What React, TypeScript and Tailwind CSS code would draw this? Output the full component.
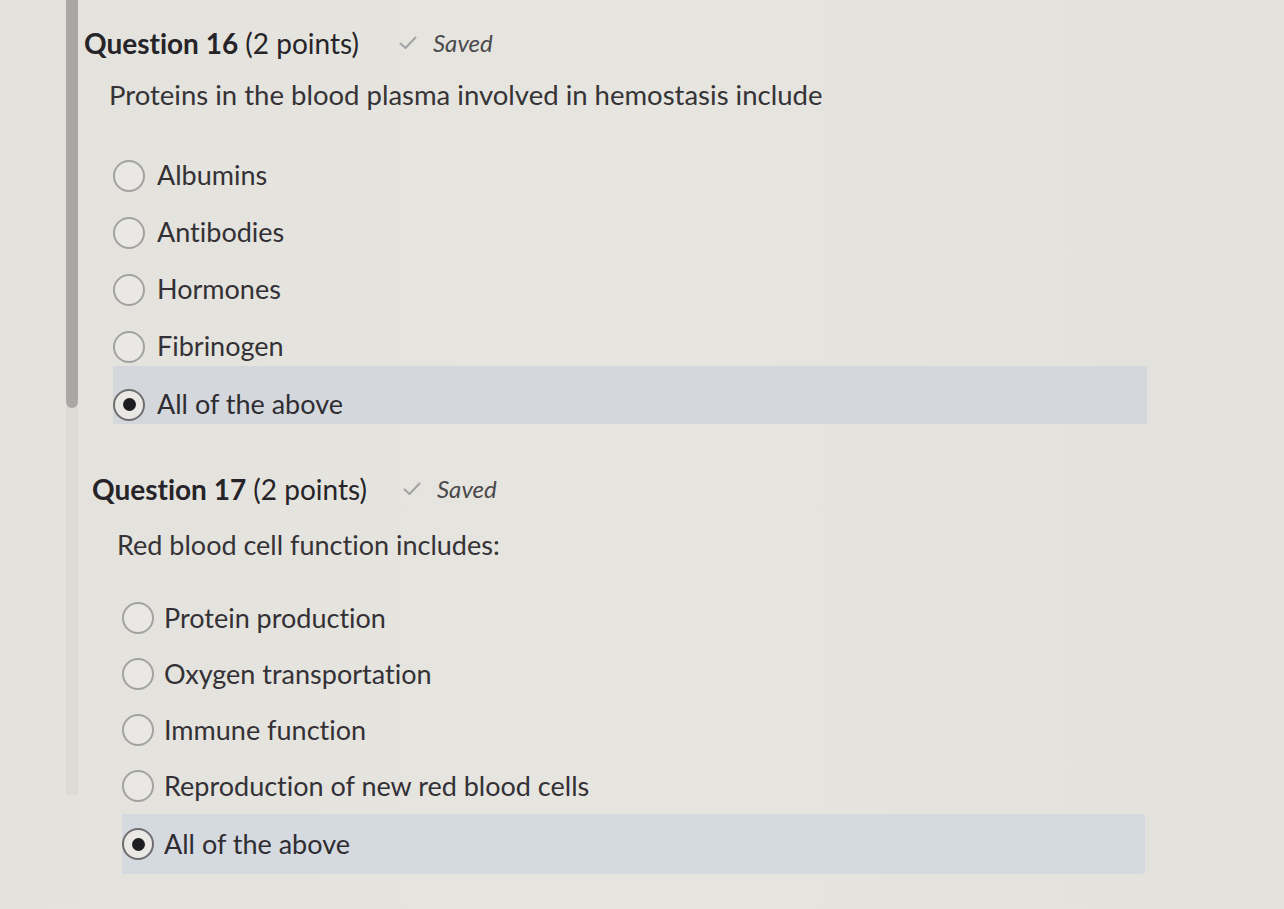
import React from "react";

type Opt = { label: string; selected?: boolean };

function Radio({ selected }: { selected?: boolean }) {
  return (
    <div
      className={
        "flex h-[32px] w-[32px] shrink-0 items-center justify-center rounded-full border-[2px] bg-[#e9e8e4] " +
        (selected ? "border-[#6e6d70]" : "border-[#a3a2a2]")
      }
    >
      {selected ? <div className="h-[13px] w-[13px] rounded-full bg-[#1e1d22]" /> : null}
    </div>
  );
}

function Saved({ ml }: { ml: string }) {
  return (
    <div className={"flex items-center gap-[16px] text-[24px] italic text-[#4a494c] " + ml}>
      <svg width="18" height="14" viewBox="0 0 18 14" fill="none">
        <path d="M1.5 7.5 L6.5 12 L16.5 1.5" stroke="#a2a1a3" strokeWidth="2" strokeLinecap="round" strokeLinejoin="round" />
      </svg>
      <span>Saved</span>
    </div>
  );
}

function App() {
  const q16: Opt[] = [
    { label: "Albumins" },
    { label: "Antibodies" },
    { label: "Hormones" },
    { label: "Fibrinogen" },
    { label: "All of the above", selected: true },
  ];
  const q17: Opt[] = [
    { label: "Protein production" },
    { label: "Oxygen transportation" },
    { label: "Immune function" },
    { label: "Reproduction of new red blood cells" },
    { label: "All of the above", selected: true },
  ];

  return (
    <div className="flex h-[909px] w-[1284px] overflow-hidden bg-gradient-to-r from-[#e3e2dd] via-[#e6e5e0] to-[#e2e1dc] font-['Lato','Noto_Sans',sans-serif] [font-variant-ligatures:none]">
      <div className="w-[66px] shrink-0" />
      <div className="h-[795px] w-[12px] shrink-0 bg-[#dcdbd6]">
        <div className="h-[408px] w-full rounded-b-full bg-[#a9a8a4]" />
      </div>
      <div className="flex-1 pl-[6px]">
        {/* Question 16 */}
        <div className="mt-[27px]">
          <div className="flex h-[32px] items-center">
            <div className="text-[28px] text-[#262428]">
              <span className="font-bold">Question 16</span> (2 points)
            </div>
            <Saved ml="ml-[40px]" />
          </div>
          <div className="ml-[25px] mt-[20px] flex h-[32px] items-center text-[27.5px] text-[#353336]">
            Proteins in the blood plasma involved in hemostasis include
          </div>
          <div className="ml-[29px] mt-[36px] w-[1034px]">
            {q16.map((o, i) =>
              o.selected ? (
                <div key={i} className="-mt-[9px] flex h-[58px] items-center gap-[12px] bg-[#d4d8dd] pt-[19px]">
                  <Radio selected />
                  <span className="text-[27px] text-[#2f2d31]">{o.label}</span>
                </div>
              ) : (
                <div key={i} className="flex h-[57px] items-center gap-[12px]">
                  <Radio />
                  <span className="text-[27px] text-[#333135]">{o.label}</span>
                </div>
              )
            )}
          </div>
        </div>

        {/* Question 17 */}
        <div className="ml-[8px] mt-[49px]">
          <div className="flex h-[32px] items-center">
            <div className="text-[28px] text-[#262428]">
              <span className="font-bold">Question 17</span> (2 points)
            </div>
            <Saved ml="ml-[36px]" />
          </div>
          <div className="ml-[25px] mt-[24px] flex h-[32px] items-center text-[27px] text-[#353336]">
            Red blood cell function includes:
          </div>
          <div className="ml-[30px] mt-[29px] w-[1023px]">
            {q17.map((o, i) =>
              o.selected ? (
                <div key={i} className="flex h-[60px] items-center gap-[10px] bg-[#d5d9e0]">
                  <Radio selected />
                  <span className="text-[27px] text-[#2f2d31]">{o.label}</span>
                </div>
              ) : (
                <div key={i} className="flex h-[56px] items-center gap-[10px]">
                  <Radio />
                  <span className="text-[27px] text-[#333135]">{o.label}</span>
                </div>
              )
            )}
          </div>
        </div>
      </div>
    </div>
  );
}

export default App;
